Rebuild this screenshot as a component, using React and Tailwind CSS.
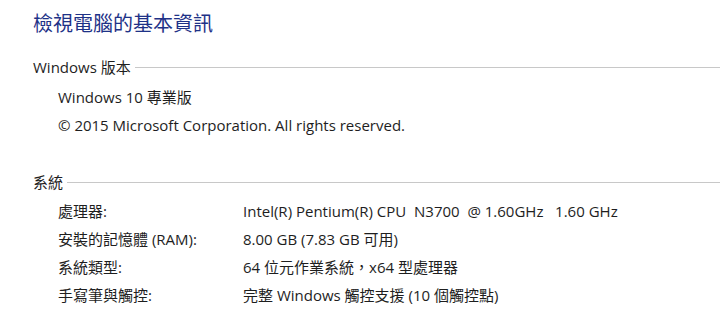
import React from 'react';

const specs = [
  ['處理器:', 'Intel(R) Pentium(R) CPU  N3700  @ 1.60GHz   1.60 GHz'],
  ['安裝的記憶體 (RAM):', '8.00 GB (7.83 GB 可用)'],
  ['系統類型:', '64 位元作業系統，x64 型處理器'],
  ['手寫筆與觸控:', '完整 Windows 觸控支援 (10 個觸控點)'],
];

function SectionHeader({ title }) {
  return (
    <div className="flex items-center h-[28px]">
      <span className="whitespace-nowrap">{title}</span>
      <div className="flex-1 h-px bg-[#c8c8c8] ml-[4px]" />
    </div>
  );
}

export default function App() {
  return (
    <div
      className="w-[720px] h-[316px] bg-white text-[#1e1e1e] text-[15px] overflow-hidden pl-[33px]"
      style={{ fontFamily: '"Open Sans", "Noto Sans CJK TC", sans-serif' }}
    >
      <div className="h-[30px] mt-[9px] flex items-center text-[20px] text-[#1e3287]">
        檢視電腦的基本資訊
      </div>

      <div className="mt-[14px]">
        <SectionHeader title="Windows 版本" />
        <div className="pl-[25px] mt-[2px]">
          <div className="h-[28px] flex items-center">Windows 10 專業版</div>
          <div className="h-[28px] flex items-center">© 2015 Microsoft Corporation. All rights reserved.</div>
        </div>
      </div>

      <div className="mt-[29px]">
        <SectionHeader title="系統" />
        <div className="pl-[25px] mt-[1px]">
          {specs.map(([label, value]) => (
            <div key={label} className="h-[28px] flex items-center">
              <div className="w-[185px] whitespace-nowrap">{label}</div>
              <div className="whitespace-pre">{value}</div>
            </div>
          ))}
        </div>
      </div>
    </div>
  );
}
